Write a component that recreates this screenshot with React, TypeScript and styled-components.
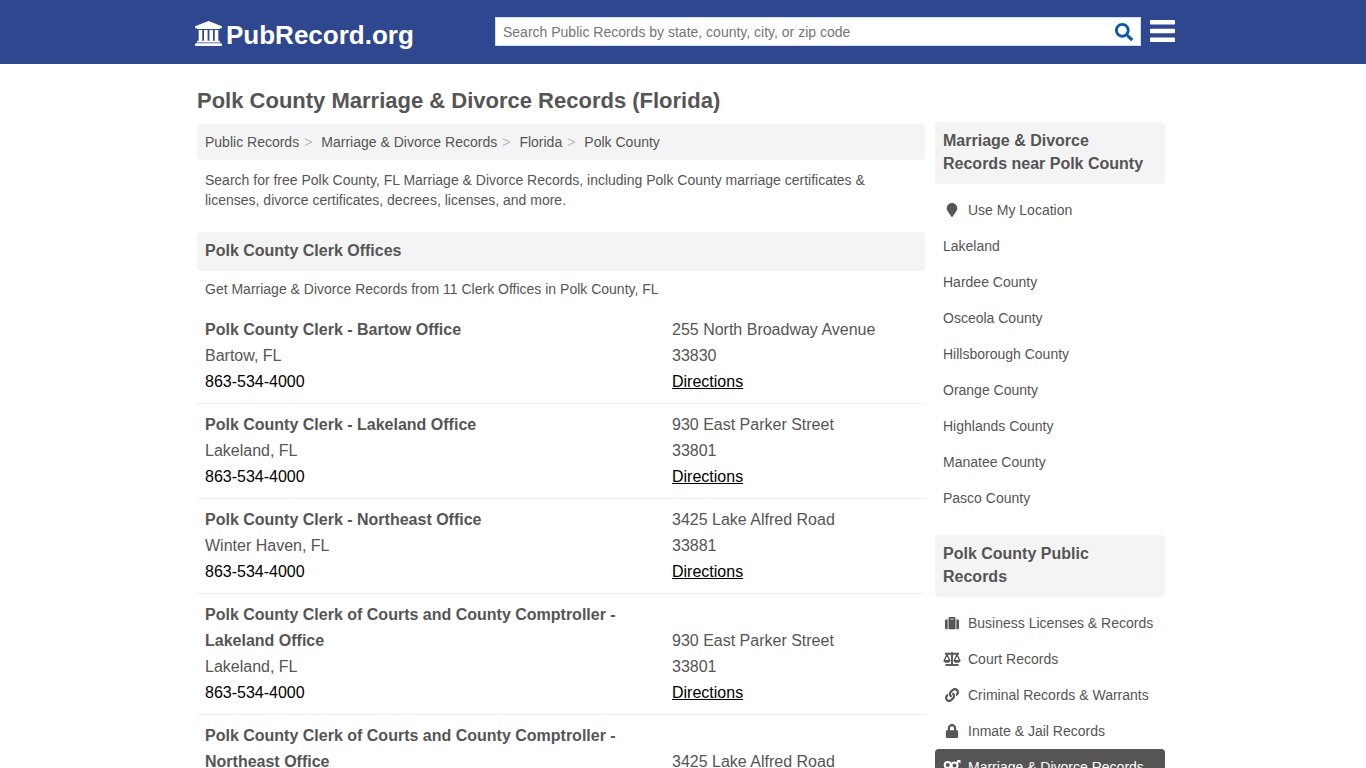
import React from "react";
import styled, { createGlobalStyle } from "styled-components";
import { FaSearch, FaMapMarker, FaSuitcase, FaLink, FaLock } from "react-icons/fa";

const GlobalStyle = createGlobalStyle`
  *, *::before, *::after { box-sizing: border-box; }
  body {
    margin: 0;
    background: #fff;
    color: #555;
    font-family: "Liberation Sans", Arial, sans-serif;
    font-size: 14px;
    line-height: 20px;
  }
  a { color: inherit; text-decoration: none; }
  ul, ol { list-style: none; margin: 0; padding: 0; }
  h1, h2, h3, p { margin: 0; }
`;

const Header = styled.header`
  background: #2e478f;
`;

const HeaderInner = styled.div`
  display: flex;
  align-items: center;
  max-width: 984px;
  height: 64px;
  margin: 0 auto;
  padding: 0 0 2px 4px;
`;

const Logo = styled.a`
  display: flex;
  align-items: center;
  gap: 4px;
  flex: 0 0 300px;
  padding-top: 8px;
  color: #fff;
  font-size: 26px;
  font-weight: bold;
  line-height: 32px;
`;

const LogoIcon = styled.svg`
  width: 27px;
  height: 25px;
  margin-bottom: 4px;
  fill: currentColor;
`;

const SearchForm = styled.form`
  display: flex;
  flex: 1;
  height: 29px;
  background: #fff;
  border: 1px solid #cfe0f5;
`;

const SearchInput = styled.input`
  flex: 1;
  min-width: 0;
  padding: 2px 7px 0;
  border: 0;
  outline: 0;
  background: transparent;
  color: #555;
  font: inherit;
  &::placeholder { color: #757575; opacity: 1; }
`;

const SearchButton = styled.button`
  display: flex;
  align-items: center;
  padding: 2px 7px 0;
  border: 0;
  background: transparent;
  color: #0d56a6;
`;

const MenuButton = styled.button`
  display: flex;
  margin-left: 9px;
  padding: 0;
  border: 0;
  background: transparent;
  color: #fff;
`;

const Page = styled.div`
  display: flex;
  align-items: flex-start;
  gap: 10px;
  max-width: 972px;
  margin: 0 auto;
  padding-right: 4px;
`;

const Main = styled.main`
  flex: 1;
  min-width: 0;
  padding-top: 21px;
`;

const Title = styled.h1`
  margin-bottom: 7px;
  font-size: 22px;
  line-height: 32px;
`;

const Breadcrumb = styled.ol`
  display: flex;
  margin-bottom: 2px;
  padding: 8px;
  border-radius: 4px;
  background: #f4f4f4;
`;

const Crumb = styled.li`
  &:not(:last-child)::after {
    content: ">";
    margin: 0 9px 0 5px;
    color: #bbb;
  }
`;

const Text = styled.p`
  padding: 8px 8px 10px;
`;

const SectionTitle = styled.h2`
  margin-top: 12px;
  padding: 7px 8px 9px;
  border-radius: 4px;
  background: #f4f4f4;
  font-size: 16px;
  line-height: 23px;
`;

const Office = styled.li`
  display: flex;
  align-items: flex-end;
  gap: 8px;
  padding: 8px;
  border-bottom: 1px solid #eee;
  font-size: 16px;
  line-height: 26px;
`;

const OfficeInfo = styled.div`
  flex: 1;
`;

const OfficeAddress = styled.div`
  flex: 0 0 245px;
`;

const OfficeName = styled.h3`
  font-size: 16px;
`;

const ActionLink = styled.a<{ $underlined?: boolean }>`
  color: #000;
  text-decoration: ${(p) => (p.$underlined ? "underline" : "none")};
`;

const Sidebar = styled.aside`
  flex: 0 0 230px;
  padding-top: 58px;
`;

const SideSection = styled.section`
  margin-bottom: 19px;
`;

const SideTitle = styled.h2`
  margin-bottom: 8px;
  padding: 7px 8px 9px;
  border-radius: 4px;
  background: #f4f4f4;
  font-size: 16px;
  line-height: 23px;
`;

const SideLink = styled.a<{ $active?: boolean }>`
  display: flex;
  align-items: center;
  gap: 7px;
  padding: 8px;
  border-radius: 4px;
  background: ${(p) => (p.$active ? "#555" : "transparent")};
  color: ${(p) => (p.$active ? "#fff" : "inherit")};
`;

const IconSlot = styled.span`
  display: flex;
  justify-content: center;
  width: 18px;
`;

const ScalesIcon = () => (
  <svg width="18" height="14" viewBox="0 0 18 14" fill="none" stroke="currentColor" aria-hidden="true">
    <path d="M2 1.800h14M9 0.300v12.500" strokeWidth="1.900" />
    <path d="M2.500 13h13" strokeWidth="1.900" />
    <path d="M4 2.600L1.200 8.600M4 2.600L6.800 8.600M14 2.600L11.200 8.600M14 2.600L16.800 8.600" strokeWidth="1.300" />
    <path d="M0.400 8h7.200c0 3.800-7.200 3.800-7.200 0zM10.400 8h7.200c0 3.800-7.200 3.800-7.200 0z" fill="currentColor" stroke="none" />
  </svg>
);

const VenusMarsIcon = () => (
  <svg width="18" height="14" viewBox="0 0 18 14" fill="none" stroke="currentColor" strokeWidth="2" aria-hidden="true">
    <circle cx="4.700" cy="5" r="3" />
    <circle cx="11.500" cy="5.400" r="3" />
    <path d="M4.700 8v6M2.200 11.300h5" strokeWidth="1.800" />
    <path d="M13.400 3.400L16.300 0.600" strokeWidth="1.800" />
    <path d="M13.400-0.300h4.100v4.100z" fill="currentColor" stroke="none" />
  </svg>
);

const offices = [
  ["Polk County Clerk - Bartow Office", "Bartow, FL", "255 North Broadway Avenue", "33830"],
  ["Polk County Clerk - Lakeland Office", "Lakeland, FL", "930 East Parker Street", "33801"],
  ["Polk County Clerk - Northeast Office", "Winter Haven, FL", "3425 Lake Alfred Road", "33881"],
  ["Polk County Clerk of Courts and County Comptroller - Lakeland Office", "Lakeland, FL", "930 East Parker Street", "33801"],
  ["Polk County Clerk of Courts and County Comptroller - Northeast Office", "Winter Haven, FL", "3425 Lake Alfred Road", "33881"],
];

const nearby = [
  "Lakeland", "Hardee County", "Osceola County", "Hillsborough County",
  "Orange County", "Highlands County", "Manatee County", "Pasco County",
];

const categories = [
  { label: "Business Licenses & Records", icon: <FaSuitcase size={14} /> },
  { label: "Court Records", icon: <ScalesIcon /> },
  { label: "Criminal Records & Warrants", icon: <FaLink size={14} /> },
  { label: "Inmate & Jail Records", icon: <FaLock size={14} /> },
  { label: "Marriage & Divorce Records", icon: <VenusMarsIcon />, active: true },
];

export default function App() {
  return (
    <>
      <GlobalStyle />
      <Header>
        <HeaderInner>
          <Logo href="#">
            <LogoIcon viewBox="0 0 1920 1792" aria-hidden="true">
              <path d="M960 0l960 384v128h-128q0 26-20.500 45t-48.500 19h-1526q-28 0-48.500-19t-20.500-45h-128v-128zM256 640h256v768h128v-768h256v768h128v-768h256v768h128v-768h256v768h59q28 0 48.500 19t20.500 45v64h-1664v-64q0-26 20.500-45t48.500-19h59v-768zM1851 1600q28 0 48.500 19t20.500 45v128h-1920v-128q0-26 20.500-45t48.500-19h1782z" />
            </LogoIcon>
            PubRecord.org
          </Logo>
          <SearchForm role="search">
            <SearchInput
              type="text"
              aria-label="Search Public Records"
              placeholder="Search Public Records by state, county, city, or zip code"
            />
            <SearchButton type="submit" aria-label="Search">
              <FaSearch size={18} />
            </SearchButton>
          </SearchForm>
          <MenuButton type="button" aria-label="Menu">
            <svg width="25" height="22" viewBox="0 0 25 22" fill="currentColor" aria-hidden="true">
              <rect y="0" width="25" height="4.500" rx="0.700" />
              <rect y="8.700" width="25" height="4.500" rx="0.700" />
              <rect y="17.400" width="25" height="4.500" rx="0.700" />
            </svg>
          </MenuButton>
        </HeaderInner>
      </Header>
      <Page>
        <Main>
          <Title>Polk County Marriage &amp; Divorce Records (Florida)</Title>
          <nav aria-label="Breadcrumb">
            <Breadcrumb>
              {["Public Records", "Marriage & Divorce Records", "Florida", "Polk County"].map((c) => (
                <Crumb key={c}><a href="#">{c}</a></Crumb>
              ))}
            </Breadcrumb>
          </nav>
          <Text>
            Search for free Polk County, FL Marriage &amp; Divorce Records, including Polk County
            marriage certificates &amp; licenses, divorce certificates, decrees, licenses, and more.
          </Text>
          <SectionTitle>Polk County Clerk Offices</SectionTitle>
          <Text>Get Marriage &amp; Divorce Records from 11 Clerk Offices in Polk County, FL</Text>
          <ul>
            {offices.map(([name, city, street, zip]) => (
              <Office key={name}>
                <OfficeInfo>
                  <OfficeName><a href="#">{name}</a></OfficeName>
                  <div>{city}</div>
                  <ActionLink href="tel:863-534-4000">863-534-4000</ActionLink>
                </OfficeInfo>
                <OfficeAddress>
                  <div>{street}</div>
                  <div>{zip}</div>
                  <ActionLink href="#" $underlined>Directions</ActionLink>
                </OfficeAddress>
              </Office>
            ))}
          </ul>
        </Main>
        <Sidebar>
          <SideSection>
            <SideTitle>Marriage &amp; Divorce Records near Polk County</SideTitle>
            <ul>
              <li>
                <SideLink href="#">
                  <IconSlot><FaMapMarker size={14} /></IconSlot>
                  Use My Location
                </SideLink>
              </li>
              {nearby.map((place) => (
                <li key={place}><SideLink href="#">{place}</SideLink></li>
              ))}
            </ul>
          </SideSection>
          <SideSection>
            <SideTitle>Polk County Public Records</SideTitle>
            <ul>
              {categories.map(({ label, icon, active }) => (
                <li key={label}>
                  <SideLink href="#" $active={active}>
                    <IconSlot>{icon}</IconSlot>
                    {label}
                  </SideLink>
                </li>
              ))}
            </ul>
          </SideSection>
        </Sidebar>
      </Page>
    </>
  );
}
